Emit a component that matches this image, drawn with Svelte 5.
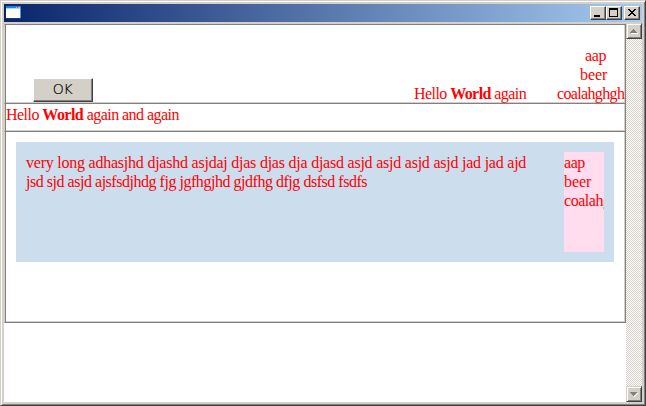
<script>
  const controls = ['min', 'max', 'close'];
</script>

<main class="window">
  <header>
    <svg class="app" width="16" height="14" viewBox="0 0 16 14" shape-rendering="crispEdges">
      <path fill="#0b408f" d="M0 1h15v12H0z"/><path fill="#1686e5" d="M0 0h15v2H0z"/>
      <path fill="#fffff5" d="M0 3h14v9H0z"/><path fill="#a9d4ef" d="M0 2h14v1H0z"/><path fill="#4f94d8" d="M14 2h1v10h-1z"/>
      <path fill="#e9a184" d="M10 1h1v1h-1zM12 1h2v1h-2z"/>
    </svg>
    <div class="controls">
      {#each controls as kind}
        <button class={kind} aria-label={kind}>
          <svg width="12" height="10" viewBox="0 0 12 10" shape-rendering="crispEdges">
            {#if kind === 'min'}<path d="M2 7h6v2H2z"/>
            {:else if kind === 'max'}<path fill-rule="evenodd" d="M1 0h9v9H1zM2 2v6h7V2z"/>
            {:else}<path d="M2 1h2v1h1v1h2V2h1V1h2v1H9v1H8v1H7v1h1v1h1v1h1v1H8V7H7V6H5v1H4v1H2V7h1V6h1V5h1V4H4V3H3V2H2z"/>{/if}
          </svg>
        </button>
      {/each}
    </div>
  </header>
  <div class="body">
    <div class="page">
      <section class="first">
        <button class="ok">OK</button>
        <p class="hello">Hello <b>World</b> again</p>
        <div class="stack"><span class="aap">aap</span><span class="beer">beer</span><span class="wide">coalahghgh</span></div>
      </section>
      <section class="second"><p>Hello <b>World</b> again and again</p></section>
      <section class="third">
        <div class="blue">
          <div class="long">
            <p class="l1">very long adhasjhd djashd asjdaj djas djas dja djasd asjd asjd asjd asjd jad jad ajd</p>
            <p class="l2">jsd sjd asjd ajsfsdjhdg fjg jgfhgjhd gjdfhg dfjg dsfsd fsdfs</p>
          </div>
          <div class="pink"><p>aap</p><p class="loose">beer</p><p>coalahghgh</p></div>
        </div>
      </section>
    </div>
    <div class="scroll">
      <div class="arrow"><svg width="8" height="5" viewBox="0 0 8 5" shape-rendering="crispEdges"><path fill="#fff" d="M1 4h7v1H1z"/><path fill="#808080" d="M3 0h1v1h1v1h1v1h1v1H0V3h1V2h1V1h1z"/></svg></div>
      <div class="arrow"><svg width="8" height="5" viewBox="0 0 8 5" shape-rendering="crispEdges"><path fill="#fff" d="M4 5V4h1V3h1V2h1V1h1v1H7v1H6v1H5v1z"/><path fill="#808080" d="M0 0h7v1H6v1H5v1H4v1H3V3H2V2H1V1H0z"/></svg></div>
    </div>
  </div>
</main>

<style>
  * { box-sizing: border-box; }
  p { margin: 0; white-space: nowrap; }
  .window {
    width: 646px; height: 406px; display: flex; flex-direction: column;
    padding: 3px; background: #d4d0c8;
    border: 1px solid; border-color: #d4d0c8 #404040 #404040 #d4d0c8;
    box-shadow: inset 1px 1px #fff, inset -1px -1px #808080;
    font: 16px/19px "Liberation Serif", "Times New Roman", serif; color: #f00;
  }
  header {
    height: 18px; flex: none; display: flex; align-items: center; justify-content: space-between;
    padding: 0 2px; background: linear-gradient(90deg, #0a246a, #a6caf0);
  }
  .app { display: block; }
  .controls { display: flex; }
  button, .arrow {
    border: 1px solid; border-color: #fff #404040 #404040 #fff;
    background: #d4d0c8; box-shadow: inset -1px -1px #808080; padding: 0;
  }
  .controls button { width: 16px; height: 14px; display: flex; align-items: flex-start; padding: 1px; }
  .controls .close { margin-left: 2px; }
  .body { flex: 1; display: flex; min-height: 0; margin: 1px 0 0; }
  .page { width: 622px; background: linear-gradient(#d4d0c8 1px, #fff 1px); padding-top: 1px; }
  section { border-right: 1px solid #808080; border-bottom: 1px solid #808080; border-left: 1px solid #d4d0c8;
    box-shadow: inset 1px 0 #808080, inset -1px -1px #d4d0c8; }
  .first { height: 80px; border-top: 1px solid #808080; display: flex; align-items: flex-end; padding: 0 0 0 28px; }
  .ok { width: 60px; height: 24px; margin-bottom: 1px; font: 200 14px/20px "DejaVu Sans", "Liberation Sans", sans-serif; letter-spacing: -.3px; color: #000; -webkit-text-stroke: .2px #000; padding: 0 1px 2px 0; }
  .hello { margin-left: 321px; width: 112px; letter-spacing: -.57px; }
  .stack { margin-left: 31px; width: 67px; flex: none; display: flex; flex-direction: column; }
  .stack span { display: block; letter-spacing: -.65px; }
  .stack .aap { margin-left: 28px; letter-spacing: -.3px; }
  .stack .beer { margin-left: 23px; letter-spacing: -.1px; }
  .second { height: 28px; padding: 1px 0 0 1px; letter-spacing: -.54px; }
  .third { height: 191px; padding: 10px 11px 0 11px; }
  .blue { height: 120px; background: #ccddee; padding: 10px; display: flex; justify-content: space-between; }
  .long { padding-top: 1px; width: 510px; }
  .l1 { letter-spacing: -.23px; }
  .l2 { letter-spacing: -.47px; }
  .pink { width: 40px; height: 100px; padding-top: 1px; background: #ffddee; overflow: hidden; letter-spacing: -.45px; }
  .loose { letter-spacing: -.1px; }
  .scroll {
    width: 16px; display: flex; flex-direction: column; justify-content: space-between;
    background: repeating-conic-gradient(#d4d0c8 0 25%, #fff 0 50%) 0 0 / 2px 2px;
  }
  .arrow { width: 16px; height: 16px; display: grid; place-items: center; border-color: #d4d0c8 #404040 #404040 #d4d0c8; box-shadow: inset 1px 1px #fff, inset -1px -1px #808080; }
</style>
